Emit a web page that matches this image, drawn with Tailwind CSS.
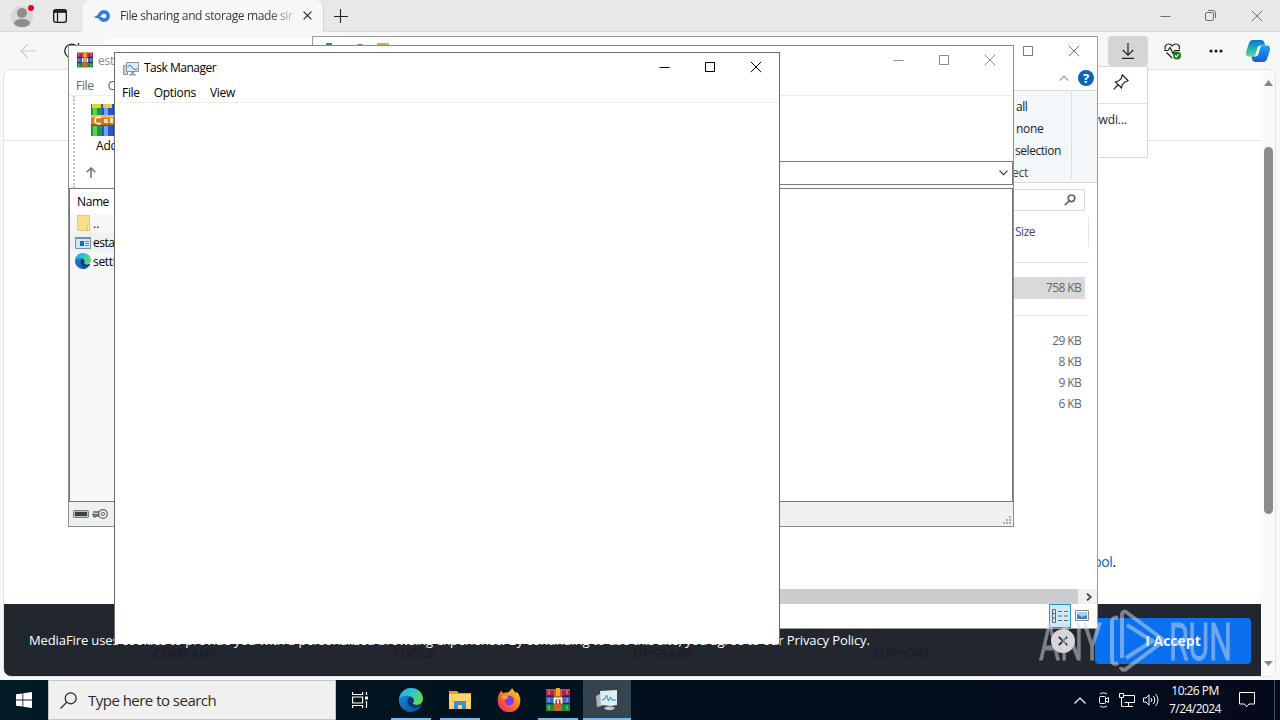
<!DOCTYPE html>
<html lang="en">
<head>
    <meta charset="UTF-8">
    <title>Desktop</title>
    <script src="https://cdn.jsdelivr.net/npm/@tailwindcss/browser@4"></script>
</head>
<body class="relative w-[1280px] h-[720px] overflow-hidden bg-[#f7f7f7] font-['Open_Sans','Noto_Sans',sans-serif] text-xs text-black whitespace-nowrap">

    <!-- Icons used more than once -->
    <svg class="absolute w-0 h-0">
        <symbol id="winrar" viewBox="0 0 24 24">
            <path d="M0 1h24v7H0z" fill="#b3204a"/>
            <path d="M0 8h24v7H0z" fill="#3b63c4"/>
            <path d="M0 15h24v8H0z" fill="#1c8a3c"/>
            <path d="M0 1h24v1.500H0z" fill="#d9436b"/>
            <path d="M0 7.500h24V9H0zM0 15h24v1.200H0z" fill="#1b2c55"/>
            <path d="M2 2.500h2v4H2zM20 2.500h2v4h-2zM2 10h2v4H2zM20 10h2v4h-2zM2 17.500h2v4H2zM20 17.500h2v4h-2z" fill="#fff" fill-opacity=".3"/>
            <path d="M8 1h8v22H8z" fill="#c0682a"/>
            <path d="M10 0h4v8h-4z" fill="#f5a623"/>
            <path d="M7 9h10v7H7z" fill="#8a4a2a"/>
            <path d="M8.500 15.500v-5h7v5M12 12v3.500" fill="none" stroke="#fff" stroke-width="1.800"/>
        </symbol>
        <linearGradient id="edgeTop" x1="0" y1="0" x2="1" y2=".5">
            <stop offset="0" stop-color="#2aa7e0"/>
            <stop offset=".55" stop-color="#2fc4d0"/>
            <stop offset="1" stop-color="#61dc58"/>
        </linearGradient>
        <linearGradient id="edgeBottom" x1="0" y1="0" x2="1" y2="1">
            <stop offset="0" stop-color="#1b8fdc"/>
            <stop offset="1" stop-color="#0c4c9e"/>
        </linearGradient>
        <symbol id="edge" viewBox="0 0 24 24">
            <path d="M12 0a12 12 0 1 0 10.500 17.500c.5-1 0-1.300-.6-1-1.400.7-2.600 1-4 1-3 0-4.600-1.500-3.900-3L12 8z" fill="url(#edgeBottom)"/>
            <path d="M.2 11C1 4.500 6 0 12.200 0 19 0 24 5 24 10.800c0 3.700-2.800 6.200-6.200 6.200-3 0-4.300-1.200-3.800-2 1.400-2 .8-6.200-4-7C6 7.300 1.500 8.500.2 11z" fill="url(#edgeTop)"/>
            <path d="M11.500 8.700C9.500 9.500 8.300 11.300 8.300 13.500c0 3 2.500 6 6.500 6.300 3 .2 5.500-.8 7.200-2.300.5-.8.300-1.200-.3-1-1.200.6-2.500.9-3.700.9-2.700 0-4.700-1.300-4-2.400 1.200-2 .5-5.300-2.500-6.300z" fill="#0a3a72"/>
        </symbol>
        <symbol id="close" viewBox="0 0 12 12"><path d="M.8.8l10.400 10.400M11.200.8L.8 11.200" fill="none" stroke="currentColor"/></symbol>
        <symbol id="max" viewBox="0 0 12 12"><path d="M1.500 1.500h9v9h-9z" fill="none" stroke="currentColor"/></symbol>
        <symbol id="min" viewBox="0 0 12 12"><path d="M1.500 6.500h10" fill="none" stroke="currentColor"/></symbol>
    </svg>

    <!-- Browser -->
    <div class="w-full h-[680px] flex flex-col">
        <div class="h-8 flex items-center bg-[#e8e8e8] border-b border-[#dadada]">
            <div class="w-[83px] h-full flex items-center pl-[11px] gap-[18px]">
                <svg class="w-6 h-6" viewBox="0 0 24 24">
                    <circle cx="11" cy="13" r="11" fill="#d9d7d5"/>
                    <circle cx="11" cy="9" r="5" fill="#8f8c8a"/>
                    <ellipse cx="11" cy="19" rx="8" ry="4" fill="#8f8c8a"/>
                    <circle cx="20" cy="4" r="3" fill="#e00b1c"/>
                </svg>
                <svg class="w-[14px] h-[14px]" viewBox="0 0 14 14" fill="none" stroke="#111">
                    <rect x=".7" y=".7" width="12.600" height="12.600" rx="2" stroke-width="1.300"/>
                    <path d="M1 2.500h12" stroke-width="2.500"/><path d="M4.500 3v10" stroke-width="1.200"/>
                </svg>
            </div>
            <div class="w-[241px] h-8 flex items-center bg-[#f7f7f7] rounded-t-lg pl-[11px] border-r border-[#d0d0d0]">
                <svg class="w-4 h-3 shrink-0" viewBox="0 0 16 12">
                    <path d="M0 7.500C1 6 3 6 4.500 3.500 5.500 1.500 7.500 0 10 0a6 6 0 010 12c-2 0-3.500-1-4.500-2.500C4.500 8 2 7.600 0 7.500z" fill="#2f7de0"/>
                    <path d="M6 6.800c1.500-2 2.500-3.100 4.100-3.100a2.300 2.300 0 010 4.600C8.800 8.300 8 7 6 6.800z" fill="#f7f7f7"/>
                </svg>
                <span class="ml-[10px] pt-px w-[173px] tracking-[-0.38px] bg-linear-to-r from-[#333] from-85% to-[#ccc] bg-clip-text text-transparent">File sharing and storage made sir</span>
                <svg class="ml-[10px] w-[9px] h-[9px] text-[#222] shrink-0" viewBox="0 0 12 12"><path d="M.8.8l10.400 10.400M11.200.8L.8 11.200" fill="none" stroke="currentColor" stroke-width="1.500"/></svg>
            </div>
            <svg class="ml-[10px] w-[14px] h-[14px]" viewBox="0 0 14 14"><path d="M0 7.500h14M6.500 0v14" stroke="#222" stroke-width="1.100"/></svg>
            <div class="ml-auto mr-[17px] flex items-center gap-[35px] text-[#707070]">
                <svg class="w-3 h-3"><use href="#min"/></svg>
                <svg class="w-[11px] h-[11px] -ml-px" viewBox="0 0 11 11" fill="none" stroke="currentColor"><rect x=".5" y="2.500" width="8" height="8" rx="1.500"/><path d="M3 .5h5a2.500 2.500 0 012.500 2.500v5"/></svg>
                <svg class="w-3 h-3"><use href="#close"/></svg>
            </div>
        </div>
        <div class="h-[37px] flex items-center pl-5">
            <svg class="w-4 h-4" viewBox="0 0 16 16" fill="none" stroke="#c9c9c9" stroke-width="1.100"><path d="M16 8H1M7.500 1.500L1 8l6.500 6.500"/></svg>
            <svg class="ml-7 w-4 h-4" viewBox="0 0 16 16" fill="none" stroke="#222" stroke-width="1.300"><path d="M14.500 10A7 7 0 1 1 13.500 4M14.500 0v4.500H10"/></svg>
            <div class="ml-6 w-[980px] h-7 mt-1 rounded-md bg-white flex pl-[18px] pt-[6px]">
                <svg class="w-4 h-4" viewBox="0 0 16 16" fill="none" stroke="#777" stroke-width="1.200"><path d="M5 7V3.500a3 3 0 016 0V7M3 7h10v8H3z"/></svg>
            </div>
            <div class="ml-auto flex items-center h-full pt-px">
                <div class="w-10 h-[30px] rounded bg-[#d5d5d5] flex items-center justify-center">
                    <svg class="w-3 h-4" viewBox="0 0 12 16" fill="none" stroke="#222" stroke-width="1.200"><path d="M6 0v12M.8 7L6 12.200 11.200 7M0 15.300h12"/></svg>
                </div>
                <svg class="ml-4 w-[18px] h-[17px]" viewBox="0 0 18 17" fill="none" stroke="#222" stroke-width="1.200">
                    <path d="M1.500 6.500C0 3.500 2.200 1 4.700 1 6.500 1 7.500 2 8.200 3 9 2 10 1 11.800 1c2.700 0 4.600 2.500 3.200 5.500M2.500 9.500l5.500 5.500M0 7.500h4L6 4.500l3 6 1.800-3H16"/>
                    <circle cx="13" cy="12.500" r="4" fill="#13800f" stroke="none"/><path d="M11 12.500l1.300 1.400 2.600-2.800" stroke="#fff"/>
                </svg>
                <svg class="ml-[27px] w-[14px] h-1" viewBox="0 0 14 4" fill="#111"><circle cx="2" cy="2" r="1.500"/><circle cx="7" cy="2" r="1.500"/><circle cx="12" cy="2" r="1.500"/></svg>
                <svg class="ml-[23px] mr-[10px] w-6 h-6" viewBox="0 0 24 24">
                    <defs>
                        <linearGradient id="copA" x1="0" y1="0" x2="0" y2="1"><stop offset="0" stop-color="#0f6fd8"/><stop offset=".5" stop-color="#1fb0b0"/><stop offset="1" stop-color="#6fd28c"/></linearGradient>
                        <linearGradient id="copB" x1="0" y1="0" x2="0" y2="1"><stop offset="0" stop-color="#1aa5e8"/><stop offset="1" stop-color="#1c59d8"/></linearGradient>
                    </defs>
                    <path d="M7 1h8c2 0 3 1 3.500 3l.7 2.500H15c-2 0-3 1-3.600 3L9.500 16c-.4 1-1 1.500-2.500 1.500H3c-3 0-3.500-2.500-2.500-6L3 4C3.800 2 5 1 7 1z" fill="url(#copA)"/>
                    <path d="M17 23H9.500c-2 0-3-1-3.500-3l-.6-2.500H9c2 0 3-1 3.600-3L14.500 8c.4-1 1-1.500 2.500-1.500h4c3 0 3.500 2.500 2.500 6L21 20c-.8 2-2 3-4 3z" fill="url(#copB)"/>
                    <path d="M11.500 9.500c.4-1.500 1.500-2.500 3-2.900L12.400 14c-.5 2-1.500 3-3 3.400z" fill="#f2fbff"/>
                </svg>
            </div>
        </div>
        <div class="ml-[3px] mr-[4px] h-[608px] flex bg-white border border-[#e3e3e3] rounded-lg overflow-hidden">
            <div class="flex-1 flex flex-col">
                <div class="h-[71px] border-b border-[#e4e4e4]"></div>
                <div class="flex-1 pt-[411px] pr-[145px] text-right text-sm tracking-[-0.3px]"><span class="text-[#0f5ebd]">ool</span>.</div>
                <!-- Cookie bar over the page footer -->
                <div class="relative h-[72px] bg-[#22262e]">
                    <div class="grid grid-cols-[240px_240px_240px_240px] pl-[149px] pt-[41px] text-[13px] leading-4 font-bold text-[#1a1e28] tracking-[-0.4px]">
                        <span>COMPANY</span><span>TOOLS</span><span>UPGRADE</span><span>SUPPORT</span>
                    </div>
                    <div class="absolute inset-0 flex items-center pt-[2px] pl-[25px] pr-[10px] text-white text-[13px]">
                        <span class="tracking-[-0.108px]">MediaFire uses cookies to provide you with a personalized browsing experience. By continuing to use this site, you agree to our Privacy Policy.</span>
                        <span class="ml-auto w-6 h-6 rounded-full bg-[#d4d4d4] text-[#222] flex items-center justify-center"><svg class="w-[10px] h-[10px]" viewBox="0 0 12 12"><path d="M1 1l10 10M11 1L1 11" stroke="currentColor" stroke-width="2"/></svg></span>
                        <span class="ml-5 w-[156px] h-[46px] rounded bg-[#0a70f0] flex items-center justify-center text-sm font-bold">I Accept</span>
                    </div>
                </div>
            </div>
            <div class="w-[14px] bg-[#fafafa] flex flex-col items-center">
                <svg class="mt-[10px] w-[9px] h-[6px] shrink-0" viewBox="0 0 9 6"><path d="M4.500 0L9 6H0z" fill="#858585"/></svg>
                <div class="mt-[61px] w-[9px] h-[367px] rounded-full bg-[#8b8b8b]"></div>
                <svg class="mt-auto mb-[10px] w-[9px] h-[5px]" viewBox="0 0 9 5"><path d="M4.500 5L9 0H0z" fill="#858585"/></svg>
            </div>
        </div>
    </div>

    <!-- Downloads flyout -->
    <div class="absolute left-[800px] top-[66px] w-[348px] h-[92px] bg-white border border-[#d8d8d8] text-right">
        <div class="h-[37px] border-b border-[#e0e0e0] flex items-center justify-end pr-[18px]">
            <svg class="w-4 h-4 mb-[6px]" viewBox="0 0 16 16" fill="none" stroke="#222" stroke-width="1.200"><path d="M9.500 1l5.500 5.500-1.200 1-2 .5-2.600 2.700-.7 3.300-6-6L5.500 7l3-2.500.2-2.300zM5 11L.7 15.300"/></svg>
        </div>
        <div class="pt-2 pr-5 text-[#222] tracking-[-0.1px]">wwdi...</div>
    </div>

    <!-- File Explorer -->
    <div class="absolute left-[312px] top-[36px] w-[786px] h-[593px] bg-white border border-[#9b9b9b] flex flex-col">
        <div class="h-[28px] flex items-center pl-[13px] pr-[17px] text-[#777]">
            <div class="flex gap-3"><span class="w-[6px] h-4 bg-[#3b7cae]"></span><span class="ml-[11px] mt-px w-[10px] h-4 rounded-sm border border-[#777]"></span><span class="w-3 h-4 bg-[#e0a94e]"></span></div>
            <div class="ml-auto flex gap-[34px]">
                <svg class="w-3 h-3"><use href="#max"/></svg>
                <svg class="w-3 h-3"><use href="#close"/></svg>
            </div>
        </div>
        <div class="h-[26px] border-b border-[#dadbdc] flex items-center justify-end gap-[9px] pr-[3px]">
            <svg class="w-[10px] h-[6px]" viewBox="0 0 10 6" fill="none" stroke="#a8a8a8" stroke-width="1.500"><path d="M.7 5.500L5 1.200l4.300 4.300"/></svg>
            <span class="w-4 h-4 rounded-full bg-[#0d62bb] text-white text-[13px] leading-4 font-bold text-center">?</span>
        </div>
        <div class="h-[92px] bg-[#f4f7fa] border-b border-[#d8d9da] flex justify-end pr-[25px]">
            <div class="w-[120px] h-[88px] border-r border-[#dfe1e4] pl-[63px] pt-[5px] leading-[22px] text-[#222] tracking-[-0.45px]">
                <p class="pl-px">all</p><p class="pl-px tracking-[-0.3px]">none</p><p>selection</p><p class="-ml-[3px] text-[#444] tracking-[-0.2px]">ect</p>
            </div>
        </div>
        <div class="h-[34px] flex justify-end pr-3 pt-[6px]">
            <div class="w-[200px] h-[22px] border border-[#d9d9d9] flex items-center justify-end pr-[8px]">
                <svg class="w-3 h-3" viewBox="0 0 12 12" fill="none" stroke="#666" stroke-width="1.700"><circle cx="7.500" cy="4.300" r="3.300"/><path d="M5.200 6.800L.8 11.200"/></svg>
            </div>
        </div>
        <div class="h-[30px] w-[776px] border-r border-[#e5e5e5] flex items-center justify-end pr-[53px] text-[#42496b] tracking-[-0.5px]">Size</div>
        <div class="w-[776px] h-4 border-b border-[#e2e2e2]"></div>
        <div class="mt-[14px] w-[772px] h-[22px] bg-[#d9d9d9] pr-1 leading-[22px] text-right text-[#666] tracking-[-0.65px]">758 KB</div>
        <div class="w-[776px] h-[17px] border-b border-[#e2e2e2]"></div>
        <div class="mt-[14px] w-[772px] pr-1 leading-[21px] text-right text-[#666] tracking-[-0.65px]">
            <p>29 KB</p><p>8 KB</p><p>9 KB</p><p>6 KB</p>
        </div>
        <div class="mt-auto h-[15px] flex bg-[#f0f0f0]">
            <div class="w-[765px] bg-[#cdcdcd]"></div>
            <svg class="m-auto mr-[5px] w-[6px] h-[8px]" viewBox="0 0 6 8" fill="none" stroke="#444" stroke-width="1.800"><path d="M1 .5L4.800 4 1 7.500"/></svg>
        </div>
        <div class="h-[24px] flex justify-end items-center pr-[8px] gap-1">
            <span class="w-[22px] h-6 bg-[#cdeaf8] border border-[#2b93c9] flex items-center justify-center">
                <svg class="w-4 h-[14px]" viewBox="0 0 16 14" fill="none" stroke="#666"><path d="M.5.500h3v13h-3zM.5 4.500h3M.5 9h3M6 2.500h4M6 7h4M6 11.500h4M12 2.500h4M12 7h4M12 11.500h4"/></svg>
            </span>
            <svg class="w-[14px] h-[11px] mb-px" viewBox="0 0 14 11"><path d="M.5.500h13v10H.5z" fill="#fff" stroke="#888"/><path d="M2 2h10v7H2z" fill="#3b7ec2"/><path d="M2 2h10v3L7 7 2 4z" fill="#a9d0f0"/></svg>
        </div>
    </div>

    <!-- WinRAR -->
    <div class="absolute left-[68px] top-[45px] w-[946px] h-[482px] bg-white border border-[#8c8c8c] flex flex-col">
        <div class="h-[29px] flex items-center pl-2 pr-[17px] text-[#8a8a8a]">
            <svg class="w-4 h-4 mb-px"><use href="#winrar"/></svg>
            <span class="ml-[5px] pt-px tracking-[-0.2px]">est</span>
            <div class="ml-auto mb-[2px] flex gap-[34px]">
                <svg class="w-3 h-3"><use href="#min"/></svg>
                <svg class="w-3 h-3"><use href="#max"/></svg>
                <svg class="w-3 h-3"><use href="#close"/></svg>
            </div>
        </div>
        <div class="h-[21px] flex items-center gap-[14px] pt-[2px] pl-[7px] border-b border-[#ececec] text-[#666] tracking-[-0.3px]"><span>File</span><span>C</span></div>
        <div class="h-[92px] flex">
            <div class="ml-1 w-[2px] border-l-2 border-dotted border-[#c4c4c4]"></div>
            <div class="flex-1 flex flex-col">
                <div class="ml-[16px] mt-[7px] w-9">
                    <svg class="w-9 h-[33px]" viewBox="0 0 36 33">
                        <path d="M0 1h11v32H0z" fill="#1f9a3a"/><path d="M2 1h4v32H2z" fill="#5ad05a"/>
                        <path d="M11 1h11v32H11z" fill="#2455cc"/><path d="M13 1h4v32h-4z" fill="#6ca4f8"/>
                        <path d="M22 1h12v32H22z" fill="#7d1b62"/>
                        <path d="M1 1h9v4H1zM12 1h9v4h-9z" fill="#eccb3c"/>
                        <path d="M0 12h34v11H0z" fill="#d9781c"/><path d="M0 12h34v2.500H0z" fill="#f6bd5e"/><path d="M0 21.500h34V23H0z" fill="#9c4a12"/>
                        <path d="M10 14.500c-5-1-6 1-6 3s1 4 6 3" fill="none" stroke="#fff2cf" stroke-width="1.800"/>
                        <path d="M13 16h4v4h-4zM19 15h3v5h-3z" fill="#fbe3ae"/>
                    </svg>
                    <p class="ml-[5px] mt-[2px] leading-4 tracking-[-0.2px]">Add</p>
                </div>
                <div class="mt-auto mb-[3px] h-[24px] flex items-center">
                    <svg class="ml-[11px] mb-[2px] w-[10px] h-[11px]" viewBox="0 0 10 11" fill="none" stroke="#777" stroke-width="1.600"><path d="M5 11V1M.7 5.300L5 1l4.300 4.300"/></svg>
                    <div class="ml-8 flex-1 h-[24px] border border-[#7a7a7a] flex items-center justify-end pr-1">
                        <svg class="w-[9px] h-[6px]" viewBox="0 0 9 6" fill="none" stroke="#333" stroke-width="1.100"><path d="M.5.700l4 4 4-4"/></svg>
                    </div>
                </div>
            </div>
        </div>
        <!-- archive listing -->
        <div class="h-[314px] border border-[#777] flex">
            <div class="w-[230px] bg-[#f7f7f7]">
                <div class="h-[25px] bg-white pl-[7px] leading-[26px] tracking-[-0.4px]">Name</div>
                <div class="h-[19px] flex items-center pl-[7px]">
                    <svg class="w-[14px] h-4 mb-px" viewBox="0 0 14 16"><path d="M.5.500h12v15H.5z" fill="#fbdf86" stroke="#e9c866"/><path d="M10.500 10h2.500v5.500h-2.500z" fill="#ffeeb4" stroke="#e9c866"/></svg>
                    <span class="ml-[2px]">..</span>
                </div>
                <div class="h-[19px] flex items-center pl-[5px] bg-[#f0f0f0]">
                    <svg class="w-4 h-3" viewBox="0 0 16 12"><path d="M.5.500h15v11H.5z" fill="#d4e9f8" stroke="#7191a6"/><path d="M0 0h16v2H0z" fill="#7191a6"/><path d="M5 4h4v5H5z" fill="#1668c8"/><path d="M10 4.500h4M10 6.500h4M10 8.500h4" stroke="#4f92d0"/></svg>
                    <span class="ml-[2px] pt-px tracking-[-0.5px]">esta</span>
                </div>
                <div class="h-[19px] flex items-center pl-[5px]">
                    <svg class="w-4 h-4 mb-px"><use href="#edge"/></svg>
                    <span class="ml-[2px] tracking-[-0.3px]">setti</span>
                </div>
            </div>
        </div>
        <div class="flex-1 bg-[#f0f0f0] flex items-center pl-1 pr-[1px]">
            <svg class="w-4 h-2" viewBox="0 0 16 8"><rect x=".5" y=".5" width="15" height="7" rx="1" fill="#b8c4bf" stroke="#73807a"/><path d="M2 2h12v4H2z" fill="#39443f"/></svg>
            <svg class="ml-[3px] w-4 h-[10px]" viewBox="0 0 16 10" fill="none" stroke="#666"><path d="M1 3h7M0 5.500h7M1 8l1-1 1 1 1-1h3" stroke-width="1.300"/><circle cx="11" cy="5" r="4.300" fill="#eee" stroke-width="1.300"/><circle cx="11" cy="5" r="1.600"/></svg>
            <svg class="ml-auto mt-3 w-[9px] h-[9px]" viewBox="0 0 9 9" fill="#aaa"><path d="M6 0h2v2H6zM6 3h2v2H6zM6 6h2v2H6zM3 3h2v2H3zM3 6h2v2H3zM0 6h2v2H0z"/></svg>
        </div>
    </div>

    <!-- Task Manager -->
    <div class="absolute left-[114px] top-[52px] w-[666px] h-[592px] bg-white border border-b-0 border-[#6b6b6b]">
        <div class="h-[29px] flex items-center pl-2 pr-[17px]">
            <svg class="w-4 h-[14px] mt-[2px]" viewBox="0 0 16 14"><path d="M.5 3.500h4v9h-4z" fill="#ccd3d8" stroke="#8e979d"/><path d="M3.500.500h12v9h-12z" fill="#d7effb" stroke="#8a9399"/><path d="M4.500 5L7 3l2.500 3 2 1.500 3-.5" fill="none" stroke="#1c7fb5"/><path d="M8 10h3v2h2v1.500H6V12h2z" fill="#9da5aa"/></svg>
            <span class="ml-[5px] tracking-[-0.5px]">Task Manager</span>
            <div class="ml-auto mb-[2px] flex gap-[34px]">
                <svg class="w-3 h-3"><use href="#min"/></svg>
                <svg class="w-3 h-3"><use href="#max"/></svg>
                <svg class="w-3 h-3"><use href="#close"/></svg>
            </div>
        </div>
        <div class="h-[21px] flex items-center gap-[14px] pt-[2px] pl-[7px] border-b border-[#ececec] tracking-[-0.3px]"><span>File</span><span>Options</span><span>View</span></div>
    </div>

    <!-- Watermark -->
    <svg class="absolute left-[1030px] top-[604px] w-[210px] h-[72px] opacity-50" viewBox="0 0 210 72" fill="none" stroke="#d5dde8">
        <g fill="#d5dde8" stroke-width=".8" font-family="Roboto" font-size="51" font-weight="400">
            <text x="9" y="55.500" textLength="63" lengthAdjust="spacingAndGlyphs">ANY</text>
            <text x="139" y="55.500" textLength="63" lengthAdjust="spacingAndGlyphs">RUN</text>
        </g>
        <path d="M88 14c-3-1-6 0-6 4v38c0 4 3 5 6 3M92 52V11c0-3 2-4 4-3l35 26c2 1 2 4 0 5L96 65c-3 2-5 0-5-2M97 21l27 17M96 54l28-18M92 20v34" stroke-width="4" stroke-linejoin="round"/>
    </svg>

    <!-- Taskbar -->
    <div class="w-full h-10 flex items-center bg-linear-to-r from-[#021b24] via-[#02101d] to-[#030a1c] text-white">
        <div class="w-12 flex justify-center">
            <svg class="w-4 h-4" viewBox="0 0 16 16" fill="#fff"><path d="M0 2.300L6.500 1.400v6.100H0zM7.300 1.300L16 0v7.500H7.300zM0 8.400h6.500v6.200L0 13.700zM7.300 8.400H16V16l-8.700-1.300z"/></svg>
        </div>
        <div class="w-[288px] h-10 bg-[#f0f0f0] border border-[#c4c4c4] flex items-center pl-[11px] text-[#2a2a2a] text-[15px]">
            <svg class="w-[17px] h-[17px]" viewBox="0 0 17 17" fill="none" stroke="#222" stroke-width="1.200"><circle cx="10.700" cy="6.300" r="5.500"/><path d="M6.800 10.200L.5 16.500"/></svg>
            <span class="ml-[11px] tracking-[-0.52px]">Type here to search</span>
        </div>
        <div class="w-[50px] flex pl-4">
            <svg class="w-4 h-4" viewBox="0 0 16 16" fill="none" stroke="#fff" stroke-width="1.200"><path d="M.6 0v2.500h10V0M.6 5h10v6H.6zM.6 16v-2.500h10V16M14.500 0v3M14.500 9v7"/><path d="M13 4.500h3v3h-3z" fill="#fff" stroke="none"/></svg>
        </div>
        <div class="w-[49px] h-10 flex flex-col items-center pt-2">
            <svg class="w-6 h-6"><use href="#edge"/></svg><span class="mt-auto w-10 h-[2px] bg-[#76b9ed]"></span>
        </div>
        <div class="w-[49px] h-10 flex flex-col items-center pt-2">
            <svg class="w-[22px] h-6" viewBox="0 0 22 24"><path d="M0 3h8l2 2h12v16H0z" fill="#e8a020"/><path d="M0 6h22v15H0z" fill="#fbd46b"/><path d="M5 21v-8h12v8h-4v-4H9v4z" fill="#3f8fd0"/></svg><span class="mt-auto w-10 h-[2px] bg-[#76b9ed]"></span>
        </div>
        <div class="w-[49px] flex justify-center">
            <svg class="w-6 h-6" viewBox="0 0 24 24">
                <defs><linearGradient id="fox" x1="1" y1="0" x2=".2" y2="1"><stop offset="0" stop-color="#ffe23a"/><stop offset=".45" stop-color="#ff8a1c"/><stop offset="1" stop-color="#f0255c"/></linearGradient></defs>
                <path d="M15 0c1 2 3 3.500 3.500 5 .8-.4.900-1 .8-1.500C22 6 23.500 9 23.300 13A11.300 11.300 0 01.700 13C.500 9 2 5 4.500 2.500L5.500 5 9 4.500C11 4.500 14 3 15 0z" fill="url(#fox)"/>
                <circle cx="12.300" cy="12.500" r="4.800" fill="#7a3fe0"/><path d="M5 8c3-1 5 0 7 1.500-2 .5-3 1.500-4 2.500-1.500-1-3-2-3-4z" fill="#ffa52c"/>
            </svg>
        </div>
        <div class="w-[50px] h-10 flex flex-col items-center pt-2">
            <svg class="w-6 h-6"><use href="#winrar"/></svg><span class="mt-auto w-10 h-[2px] bg-[#76b9ed]"></span>
        </div>
        <div class="w-12 h-10 flex flex-col items-center pt-2 bg-[#34454f]">
            <svg class="w-6 h-6" viewBox="0 0 24 24"><path d="M1 8l6-3v13l-5 1z" fill="#aeb5b9"/><path d="M5 3l17-1v15l-6 1-10-1z" fill="#e6eaec"/><path d="M7 5l14-1v11l-14 1z" fill="#d9effa"/><path d="M7 12l3-1 1.500-4 2 6 2-4 1.500 3h4" fill="none" stroke="#2684c4"/><path d="M9 20c2-2 9-2 11 0-2 3-9 3-11 0z" fill="#c3c8ca"/></svg><span class="mt-auto w-12 h-[2px] bg-[#76b9ed]"></span>
        </div>
        <div class="ml-auto h-full flex items-center">
            <svg class="w-3 h-[7px]" viewBox="0 0 12 7" fill="none" stroke="#fff" stroke-width="1.200"><path d="M.5 6.500L6 1l5.500 5.500"/></svg>
            <svg class="ml-3 w-3 h-4" viewBox="0 0 12 16" fill="none" stroke="#fff"><rect x="1.500" y="4.500" width="6" height="7" rx="1"/><path d="M7.500 7l3-1.500v5l-3-1.500M2 2c2-1.500 5-1.500 7 0M2 14c2 1.500 5 1.500 7 0"/></svg>
            <svg class="ml-[9px] w-4 h-[14px]" viewBox="0 0 16 14" fill="none" stroke="#fff"><path d="M5 2.500h10.500v7H5.500M9.500 9.500v3.500M6 13.500h8M.5.500h4v4h-4zM2.500 4.500v9h3"/></svg>
            <svg class="ml-2 w-4 h-[14px]" viewBox="0 0 16 14" fill="none" stroke="#fff"><path d="M.5 5h2.500L6 1.800v10.400L3 9H.5zM8 5c1 1.200 1 2.800 0 4M10.300 3c2 2.300 2 5.700 0 8M12.600 1c3 3.500 3 8.500 0 12"/></svg>
            <div class="ml-[7px] w-[58px] text-center text-xs leading-[18px] tracking-[-0.55px]"><p>10:26 PM</p><p>7/24/2024</p></div>
            <svg class="ml-[15px] w-4 h-4" viewBox="0 0 16 16" fill="none" stroke="#fff"><path d="M.5.500h15v11.500H10L7.500 14.800 5.500 12h-5z"/></svg>
            <span class="ml-[19px] mr-[5px] w-px h-full bg-[#4a5260]"></span>
        </div>
    </div>
</body>
</html>
